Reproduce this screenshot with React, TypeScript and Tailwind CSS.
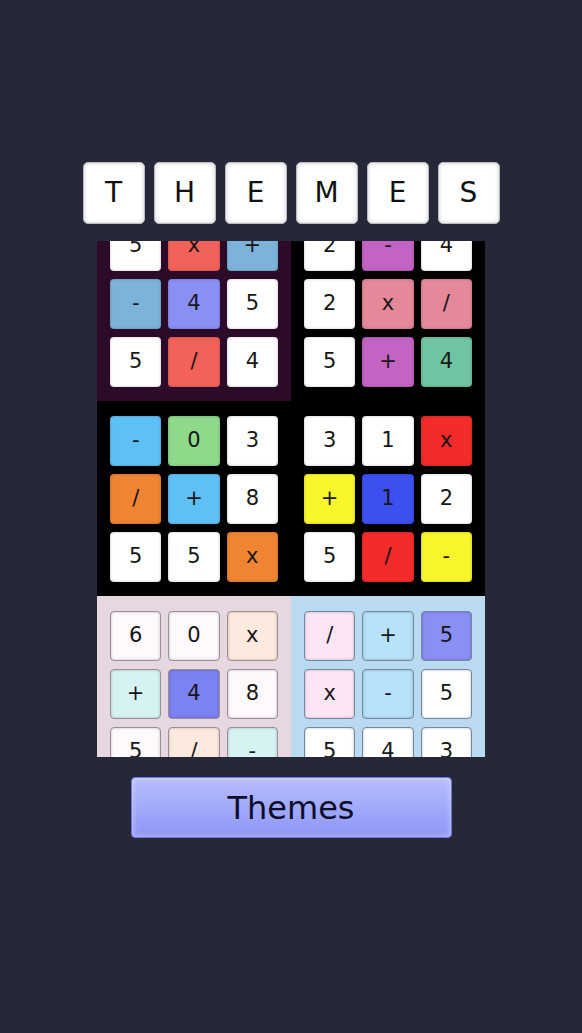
import { useEffect, useRef } from "react";

type Tile = [string, string];

type Theme = {
  bg: string;
  border: string;
  tiles: Tile[];
};

const W = "bg-white";

const THEMES: Theme[] = [
  {
    bg: "bg-[#2b0b28]",
    border: "",
    tiles: [
      ["5", W], ["x", "bg-[#f2625b]"], ["+", "bg-[#7db3d9]"],
      ["-", "bg-[#7db3d9]"], ["4", "bg-[#8a8ff6]"], ["5", W],
      ["5", W], ["/", "bg-[#f2625b]"], ["4", W],
    ],
  },
  {
    bg: "bg-black",
    border: "",
    tiles: [
      ["2", W], ["-", "bg-[#c363c3]"], ["4", W],
      ["2", W], ["x", "bg-[#e5889a]"], ["/", "bg-[#e5889a]"],
      ["5", W], ["+", "bg-[#c363c3]"], ["4", "bg-[#6fc4a1]"],
    ],
  },
  {
    bg: "bg-black",
    border: "",
    tiles: [
      ["-", "bg-[#5ec1f6]"], ["0", "bg-[#8fd98b]"], ["3", W],
      ["/", "bg-[#ef8532]"], ["+", "bg-[#5ec1f6]"], ["8", W],
      ["5", W], ["5", W], ["x", "bg-[#ef8532]"],
    ],
  },
  {
    bg: "bg-black",
    border: "",
    tiles: [
      ["3", W], ["1", W], ["x", "bg-[#f42b2b]"],
      ["+", "bg-[#f8f52a]"], ["1", "bg-[#3c50f0]"], ["2", W],
      ["5", W], ["/", "bg-[#f42b2b]"], ["-", "bg-[#f8f52a]"],
    ],
  },
  {
    bg: "bg-[#e6d7e1]",
    border: "border border-[#9a8d95]",
    tiles: [
      ["6", "bg-[#fff8fc]"], ["0", "bg-[#fff8fc]"], ["x", "bg-[#fdeadf]"],
      ["+", "bg-[#d6f3f3]"], ["4", "bg-[#7c82f1]"], ["8", "bg-[#fff8fc]"],
      ["5", "bg-[#fff8fc]"], ["/", "bg-[#fdeadf]"], ["-", "bg-[#d6f3f3]"],
    ],
  },
  {
    bg: "bg-[#badaf2]",
    border: "border border-[#6f8aa0]",
    tiles: [
      ["/", "bg-[#fde5f5]"], ["+", "bg-[#b6e2fa]"], ["5", "bg-[#8a8ef5]"],
      ["x", "bg-[#fde5f5]"], ["-", "bg-[#b6e2fa]"], ["5", W],
      ["5", W], ["4", W], ["3", W],
    ],
  },
];

const FONT = "font-['DejaVu_Sans','Noto_Sans',sans-serif]";

function ThemePanel({ theme }: { theme: Theme }) {
  return (
    <div className={`${theme.bg} p-[13px] pt-[15px] pb-[14px]`}>
      <div className="grid grid-cols-3 gap-x-[7px] gap-y-[8px]">
        {theme.tiles.map(([label, color], i) => (
          <div
            key={i}
            className={`${color} ${theme.border} h-[50px] rounded-[4px] flex items-center justify-center text-[21px] text-[#161616] shadow-[inset_0_0_3px_rgba(0,0,0,0.25)]`}
          >
            {label}
          </div>
        ))}
      </div>
    </div>
  );
}

export default function App() {
  const scroller = useRef<HTMLDivElement>(null);

  useEffect(() => {
    if (scroller.current) scroller.current.scrollTop = 35;
  }, []);

  return (
    <div className={`min-h-[1033px] w-full bg-[#262837] flex flex-col items-center ${FONT}`}>
      {/* title letters */}
      <div className="mt-[162px] flex gap-[9px]">
        {"THEMES".split("").map((c, i) => (
          <div
            key={i}
            className="h-[62px] w-[62px] rounded-[5px] bg-white border border-[#b9b9c0] flex items-center justify-center text-[28px] text-[#111] shadow-[inset_0_0_4px_rgba(0,0,0,0.2)]"
          >
            {c}
          </div>
        ))}
      </div>

      {/* theme picker */}
      <div
        ref={scroller}
        className="mt-[17px] h-[516px] w-[388px] overflow-hidden"
      >
        <div className="grid grid-cols-2">
          {THEMES.map((t, i) => (
            <ThemePanel key={i} theme={t} />
          ))}
        </div>
      </div>

      <button className="mt-[20px] h-[61px] w-[321px] rounded-[4px] border border-[#6c74e6] bg-gradient-to-b from-[#b6bdff] to-[#8e95f6] text-[32px] text-[#0d0f2a] shadow-[inset_0_0_6px_rgba(255,255,255,0.5)]">
        Themes
      </button>
    </div>
  );
}
